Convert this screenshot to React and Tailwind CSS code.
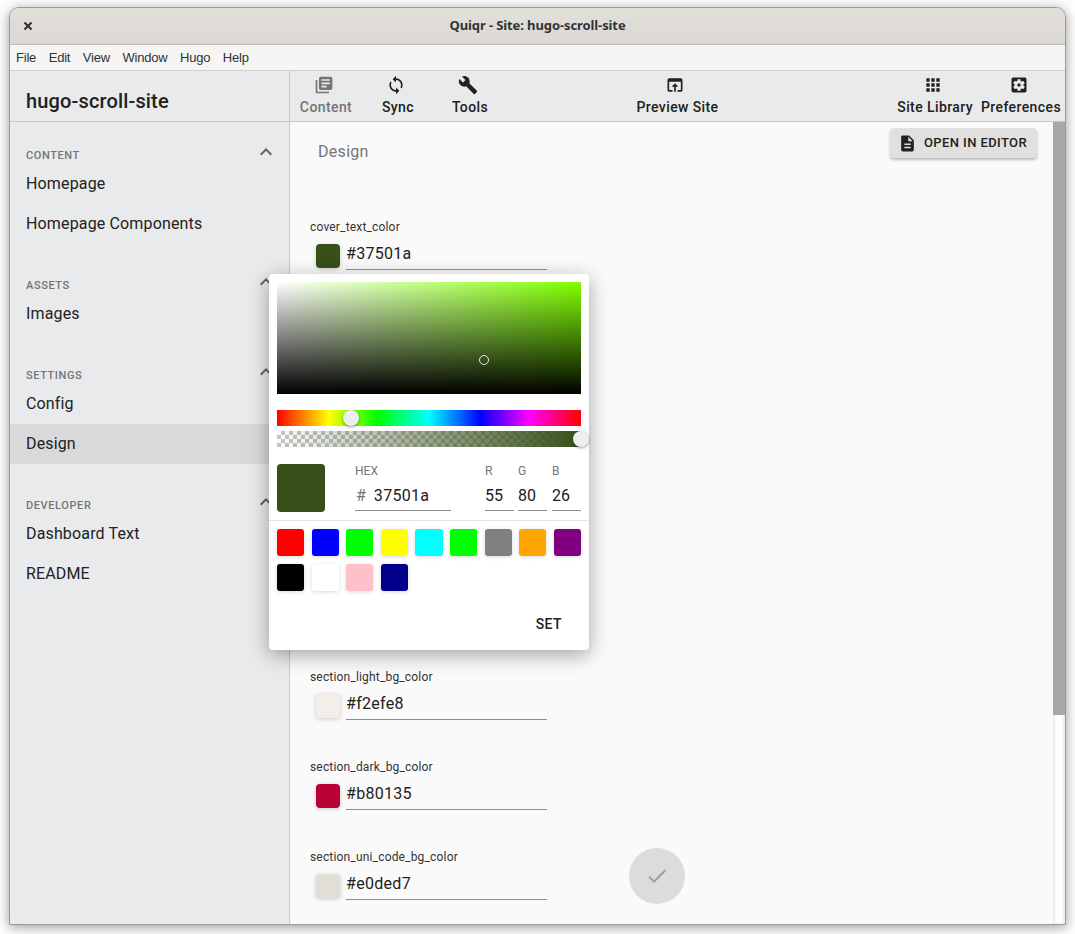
import { MdLibraryBooks, MdSync, MdBuild, MdOpenInBrowser, MdApps, MdSettingsApplications, MdDescription, MdCheck, MdExpandLess } from 'react-icons/md';

const menus = ['File', 'Edit', 'View', 'Window', 'Hugo', 'Help'];

const groups = [
    { title: 'Content', items: ['Homepage', 'Homepage Components'] },
    { title: 'Assets', items: ['Images'] },
    { title: 'Settings', items: ['Config', 'Design'] },
    { title: 'Developer', items: ['Dashboard Text', 'README'] },
];

const swatches = ['#ff0000', '#0000ff', '#00ff00', '#ffff00', '#00ffff', '#00ff00', '#808080', '#ffa500', '#800080', '#000000', '#ffffff', '#ffc0cb', '#00008b'];

const ToolButton = ({ icon: Icon, label, muted, className }) => (
    <div className={`flex flex-col items-center ${className || ''} ${muted ? 'text-[#757575]' : 'text-[#212121]'}`}>
        <Icon size={20} className="mt-1 mr-1" />
        <span className="mt-[2px] text-sm font-medium leading-5 tracking-[0.4px] whitespace-nowrap">{label}</span>
    </div>
);

const ColorField = ({ name, value }) => (
    <div className="h-[90px]">
        <div className="text-xs leading-4 tracking-[0.17px] text-[#333]">{name}</div>
        <div className="mt-[9px] ml-[6px] flex">
            <div className="w-6 h-6 rounded-[4px] shadow-[0_1px_4px_rgba(0,0,0,0.2)]" style={{ backgroundColor: value }}></div>
            <div className="ml-[6px] w-[201px] h-[26px] border-b border-[#8f8f8f] text-base leading-5 tracking-[0.3px] text-[#212121]">{value}</div>
        </div>
    </div>
);

const RgbInput = ({ label, value, className }) => (
    <div className={`w-[29px] -mt-px ${className || ''}`}>
        <div className="text-xs leading-4 text-[#757575]">{label}</div>
        <div className="mt-[7px] h-[25px] border-b border-[#8f8f8f] text-base leading-5 text-[#212121]">{value}</div>
    </div>
);

const ColorPopover = () => (
    <div className="absolute left-[259px] top-[266px] w-[320px] h-[376px] rounded-[4px] bg-white shadow-[0_5px_20px_rgba(0,0,0,0.35)]">
        <div className="px-2 pt-2">
            <div className="relative h-28 bg-[linear-gradient(to_top,#000,transparent),linear-gradient(to_right,#fff,#80ff00)]">
                <div className="absolute left-[202px] top-[73px] w-[10px] h-[10px] rounded-full border border-[#e8e8e8]"></div>
            </div>
            <div className="relative mt-4 h-4 bg-[linear-gradient(to_right,#f00,#ff0_17%,#0f0_33%,#0ff_50%,#00f_67%,#f0f_83%,#f00)]">
                <div className="absolute left-[66px] top-0 w-4 h-4 rounded-full bg-[#eeeeee] shadow-[0_1px_3px_rgba(0,0,0,0.4)]"></div>
            </div>
            <div className="relative mt-[5px] h-4 bg-[linear-gradient(to_right,rgba(55,80,26,0),rgb(55,80,26)),repeating-conic-gradient(#c4c4c4_0_25%,#ffffff_0_50%)] bg-[length:100%_100%,8px_8px]">
                <div className="absolute left-[296px] top-0 w-4 h-4 rounded-full bg-[#eeeeee] shadow-[0_1px_3px_rgba(0,0,0,0.4)]"></div>
            </div>
            <div className="mt-[17px] flex">
                <div className="w-12 h-12 rounded-[4px] bg-[#37501a]"></div>
                <div className="ml-[30px] w-24 -mt-px">
                    <div className="text-xs leading-4 text-[#757575]">HEX</div>
                    <div className="mt-[7px] h-[25px] border-b border-[#8f8f8f] text-base leading-5 text-[#212121] flex">
                        <span className="ml-px text-[#757575]">#</span>
                        <span className="ml-2 tracking-[0.3px]">37501a</span>
                    </div>
                </div>
                <RgbInput label="R" value="55" className="ml-[34px]" />
                <RgbInput label="G" value="80" className="ml-1" />
                <RgbInput label="B" value="26" className="ml-[5px]" />
            </div>
        </div>
        <div className="mt-2 border-t border-[#e3e3e3]"></div>
        <div className="px-2 pt-2 grid grid-cols-9 gap-x-[7.6px] gap-y-2">
            {swatches.map((color, i) => (
                <div key={i} className="h-[27px] rounded-[3px] shadow-[0_1px_4px_rgba(0,0,0,0.15)]" style={{ backgroundColor: color }}></div>
            ))}
        </div>
        <div className="mt-[23px] pr-[27px] text-right text-sm font-medium leading-5 tracking-[0.4px] text-[#212121]">SET</div>
    </div>
);

export default function App() {
    return (
        <div className="w-[1075px] h-[934px] overflow-hidden bg-[#fdfdfd] pt-[7px] pl-[9px] font-['Roboto',sans-serif]">
            <div className="relative w-[1057px] h-[918px] flex flex-col overflow-hidden rounded-t-[10px] border border-[#9a9a9a] shadow-[0_2px_12px_rgba(0,0,0,0.4)] bg-[#fafafa]">
                {/* Title bar */}
                <div className="relative h-[37px] shrink-0 flex items-center justify-center border-b border-[#c0bdb8] bg-[linear-gradient(to_bottom,#e3e0dc,#dbd8d3)]">
                    <svg width="10" height="10" viewBox="0 0 10 10" className="absolute left-[13px] top-[13px] text-[#2e2e2e]">
                        <path d="M1.5 1.5l7 7M8.5 1.5l-7 7" stroke="currentColor" strokeWidth="2" fill="none" />
                    </svg>
                    <span className="text-[13px] font-bold tracking-[-0.1px] text-[#2e3436] font-['Noto_Sans',sans-serif]">Quiqr - Site: hugo-scroll-site</span>
                </div>

                {/* Menu bar */}
                <div className="h-[26px] shrink-0 flex items-center pl-[6px] gap-[12.5px] bg-[#f6f5f4] border-b border-[#cfcfcf] text-[13px] tracking-[-0.2px] text-[#2e3436] font-['Liberation_Sans',sans-serif]">
                    {menus.map(menu => <span key={menu}>{menu}</span>)}
                </div>

                {/* Toolbar */}
                <div className="h-[51px] shrink-0 flex bg-[#e9eaec] border-b border-[#c8c8c8]">
                    <div className="w-[280px] shrink-0 border-r border-[#c8c8c8] pl-4 pt-[18px] text-xl font-medium leading-6 tracking-[0.15px] text-[#212121]">hugo-scroll-site</div>
                    <div className="flex-1 grid grid-cols-3">
                        <div className="flex">
                            <ToolButton icon={MdLibraryBooks} label="Content" muted className="w-[72px]" />
                            <ToolButton icon={MdSync} label="Sync" className="w-[72px]" />
                            <ToolButton icon={MdBuild} label="Tools" className="w-[72px]" />
                        </div>
                        <div className="flex justify-center">
                            <ToolButton icon={MdOpenInBrowser} label="Preview Site" />
                        </div>
                        <div className="flex justify-end pr-1">
                            <ToolButton icon={MdApps} label="Site Library" />
                            <ToolButton icon={MdSettingsApplications} label="Preferences" className="ml-2" />
                        </div>
                    </div>
                </div>

                <div className="flex-1 flex min-h-0">
                    {/* Sidebar */}
                    <div className="w-[280px] shrink-0 border-r border-[#c8c8c8] bg-[#e9eaec] pt-6">
                        {groups.map(group => (
                            <div key={group.title} className="mb-8">
                                <div className="h-[18px] flex items-center justify-between pl-4 pr-[11px]">
                                    <span className="pt-[2px] text-[11px] font-medium uppercase tracking-[0.6px] text-[#757575]">{group.title}</span>
                                    <MdExpandLess size={24} className="-mt-[6px] text-[#616161]" />
                                </div>
                                {group.items.map(item => (
                                    <div key={item} className={`h-10 flex items-center pl-4 text-base tracking-[0.15px] text-[#212121] ${item === 'Design' ? 'bg-[#d9d9d9]' : ''}`}>
                                        {item}
                                    </div>
                                ))}
                            </div>
                        ))}
                    </div>

                    {/* Main content */}
                    <div className="relative flex-1 min-w-0 bg-[#fafafa]">
                        <div className="flex justify-between pr-4 pt-[6px]">
                            <div className="pl-7 pt-[14px] text-base leading-5 tracking-[0.3px] text-[#757575]">Design</div>
                            <div className="h-[30px] w-[147px] flex items-center rounded-[4px] bg-[#e0e0e0] pl-2 text-[13px] font-medium tracking-[0.4px] text-[#212121] shadow-[0_2px_3px_rgba(0,0,0,0.25)]">
                                <MdDescription size={19} />
                                <span className="ml-[7px]">OPEN IN EDITOR</span>
                            </div>
                        </div>
                        <div className="pl-5 pt-[57px]">
                            <ColorField name="cover_text_color" value="#37501a" />
                            <div className="h-[360px]"></div>
                            <ColorField name="section_light_bg_color" value="#f2efe8" />
                            <ColorField name="section_dark_bg_color" value="#b80135" />
                            <ColorField name="section_uni_code_bg_color" value="#e0ded7" />
                        </div>
                        <div className="absolute left-[339px] top-[726px] w-14 h-14 rounded-full bg-[#dcdcdc] flex items-center justify-center">
                            <MdCheck size={24} className="text-[#9e9e9e]" />
                        </div>
                    </div>

                    {/* Scrollbar */}
                    <div className="w-3 shrink-0 bg-white shadow-[inset_2px_0_2px_rgba(0,0,0,0.08),inset_-2px_0_2px_rgba(0,0,0,0.08)]">
                        <div className="h-[593px] bg-[#a8a8a8]"></div>
                    </div>
                </div>

                <ColorPopover />
            </div>
        </div>
    );
}
